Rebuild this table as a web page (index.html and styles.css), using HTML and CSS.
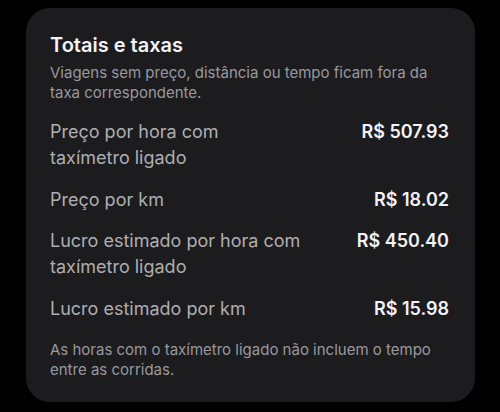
FILE: index.html
```html
<!DOCTYPE html>
<html lang="pt">
<head>
    <meta charset="UTF-8">
    <meta name="viewport" content="width=device-width, initial-scale=1.0">
    <title>Totais e taxas</title>
    <link rel="stylesheet" href="styles.css">
</head>
<body>
    <div class="card">
        <h2 class="card-title">Totais e taxas</h2>
        <p class="card-note">Viagens sem preço, distância ou tempo ficam fora da taxa correspondente.</p>

        <div class="rows">
            <div class="row">
                <span class="label">Preço por hora com taxímetro ligado</span>
                <span class="value">R$ 507.93</span>
            </div>
            <div class="row">
                <span class="label">Preço por km</span>
                <span class="value">R$ 18.02</span>
            </div>
            <div class="row">
                <span class="label">Lucro estimado por hora com taxímetro ligado</span>
                <span class="value">R$ 450.40</span>
            </div>
            <div class="row">
                <span class="label">Lucro estimado por km</span>
                <span class="value">R$ 15.98</span>
            </div>
        </div>

        <p class="card-note footer">As horas com o taxímetro ligado não incluem o tempo entre as corridas.</p>
    </div>
</body>
</html>
```

FILE: styles.css
```css
body {
    font-family: Inter, "Noto Sans", sans-serif;
    background-color: #000;
    margin: 0;
    padding: 8px 25px 10px 26px;
}

.card {
    background-color: #1c1c1e;
    border-radius: 24px;
    padding: 24px 26px 22px 24px;
}

.card-title {
    font-size: 20px;
    font-weight: 600;
    line-height: 26px;
    color: #f2f2f7;
    margin: 0;
}

.card-note {
    font-size: 15px;
    line-height: 20px;
    color: #98989e;
    margin: 5px 0 0;
}

.rows {
    display: flex;
    flex-direction: column;
    gap: 15.5px;
    margin-top: 16px;
}

.row {
    display: flex;
    justify-content: space-between;
    align-items: flex-start;
    gap: 16px;
}

.label {
    font-size: 18px;
    line-height: 26px;
    color: #aeaeb2;
    max-width: 251px;
}

.value {
    font-size: 18px;
    line-height: 26px;
    font-weight: 600;
    color: #f2f2f7;
    white-space: nowrap;
}

.footer {
    margin-top: 18.5px;
}
```
